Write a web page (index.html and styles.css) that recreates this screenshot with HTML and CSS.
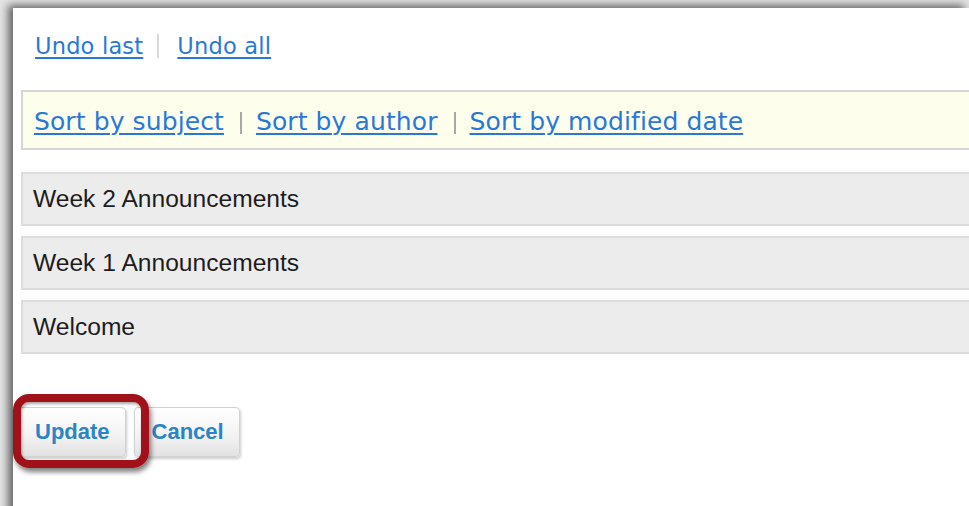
FILE: index.html
```html
<!DOCTYPE html>
<html lang="en">
<head>
<meta charset="utf-8">
<title>Reorder announcements</title>
<link rel="stylesheet" href="styles.css">
</head>
<body>
<div class="frame">
  <div class="undo-links">
    <a href="#" class="link">Undo last</a>
    <span class="divider"></span>
    <a href="#" class="link">Undo all</a>
  </div>

  <div class="sort-bar">
    <a href="#" class="link">Sort by subject</a>
    <span class="pipe"></span>
    <a href="#" class="link">Sort by author</a>
    <span class="pipe"></span>
    <a href="#" class="link">Sort by modified date</a>
  </div>

  <ul class="item-list">
    <li class="item">Week 2 Announcements</li>
    <li class="item">Week 1 Announcements</li>
    <li class="item">Welcome</li>
  </ul>

  <div class="actions">
    <button class="btn" type="button">Update</button>
    <button class="btn" type="button">Cancel</button>
    <span class="callout"></span>
  </div>
</div>
</body>
</html>
```

FILE: styles.css
```css
html, body {
  margin: 0;
  padding: 0;
}

body {
  width: 969px;
  height: 506px;
  overflow: hidden;
  background: #e4e4e4;
}

.frame {
  position: relative;
  margin: 8px 0 0 13px;
  height: 520px;
  background: #ffffff;
  box-shadow: -5px -3px 8px rgba(0, 0, 0, 0.55);
  padding: 0 0 0 8px;
}

.link {
  color: #2a78d6;
  text-decoration: underline;
  text-underline-offset: 3px;
  text-decoration-thickness: 2px;
}

.undo-links {
  display: flex;
  align-items: center;
  padding: 23px 0 0 14px;
  height: 30px;
  font-family: "DejaVu Sans", Verdana, sans-serif;
  font-size: 22.5px;
  letter-spacing: 0.2px;
  line-height: 30px;
}

.divider {
  display: inline-block;
  width: 2px;
  height: 24px;
  background: #dadada;
  margin: 0 18px 0 14px;
}

.sort-bar {
  margin-top: 29px;
  margin-right: -20px;
  height: 56px;
  display: flex;
  align-items: center;
  padding-left: 11px;
  background: #fefeec;
  border: 2px solid #d6d6d6;
  font-family: "DejaVu Sans", Verdana, sans-serif;
  font-size: 25px;
  letter-spacing: 0.1px;
  line-height: 30px;
}

.sort-bar .link {
  position: relative;
  top: 2px;
}

.pipe {
  display: inline-block;
  width: 2px;
  height: 22px;
  background: #a8a8a8;
  margin: 6px 14px 0 16px;
}

.item-list {
  list-style: none;
  margin: 22px -20px 0 0;
  padding: 0;
  display: flex;
  flex-direction: column;
  gap: 10px;
}

.item {
  height: 50px;
  display: flex;
  align-items: center;
  padding-left: 10px;
  background: #ececec;
  border: 2px solid #dcdcdc;
  font-family: "Liberation Sans", Arial, sans-serif;
  font-size: 24.6px;
  color: #1c1c1c;
}

.actions {
  position: relative;
  display: flex;
  gap: 8px;
  margin: 53px 0 0 -4px;
}

.btn {
  height: 50px;
  padding: 0 15px 0 17px;
  border: 1px solid #d2d2d2;
  border-radius: 4px;
  background: linear-gradient(#ffffff, #f2f2f2 60%, #e2e2e2);
  box-shadow: 1px 2px 3px rgba(0, 0, 0, 0.2);
  font-family: "Liberation Sans", Arial, sans-serif;
  font-weight: bold;
  font-size: 22px;
  color: #2a84c6;
}

.callout {
  position: absolute;
  left: -4px;
  top: -13px;
  width: 120px;
  height: 58px;
  border: 8px solid #a0111a;
  border-radius: 16px;
  box-shadow: 2px 4px 5px rgba(0, 0, 0, 0.5), inset 1px 2px 3px rgba(0, 0, 0, 0.35);
}
```
